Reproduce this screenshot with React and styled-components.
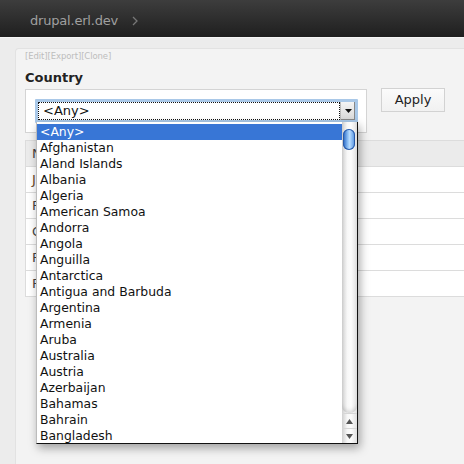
import React from "react";
import styled, { createGlobalStyle } from "styled-components";

const Global = createGlobalStyle`
  html, body { margin: 0; padding: 0; }
  body {
    width: 464px; height: 464px; overflow: hidden;
    background: #ececec;
    font-family: "DejaVu Sans", "Liberation Sans", sans-serif;
  }
`;

const Page = styled.div`
  position: relative;
  width: 464px;
  height: 464px;
  display: flex;
  flex-direction: column;
`;

const TopBar = styled.div`
  height: 38px;
  flex: none;
  background: linear-gradient(#3d3d3d, #1f1f1f);
  border-bottom: 1px solid #f6f6f6;
  display: flex;
  align-items: center;
  padding: 4px 0 0 30px;
  box-sizing: border-box;
  gap: 14px;
`;

const Crumb = styled.span`
  color: #a0a0a0;
  font-size: 13px;
  font-family: "DejaVu Sans", sans-serif;
  letter-spacing: -0.2px;
`;

const Chevron = styled.svg`
  width: 6px;
  height: 10px;
`;

const Body = styled.div`
  flex: 1;
  padding: 10px 0 0 15px;
  display: flex;
`;

const Panel = styled.div`
  flex: 1;
  background: #f3f3f3;
  border-top: 1px solid #e2e2e2;
  border-left: 1px solid #e2e2e2;
  border-top-left-radius: 4px;
  padding: 2px 0 0 9px;
  display: flex;
  flex-direction: column;
`;

const Links = styled.div`
  font-size: 8.5px;
  color: #bdbdbd;
  height: 11px;
  line-height: 11px;
  font-family: "DejaVu Sans", sans-serif;
  letter-spacing: -0.1px;
`;

const Label = styled.div`
  font-weight: bold;
  font-size: 13px;
  color: #222;
  margin-top: 8px;
  height: 16px;
  line-height: 16px;
`;

const FormRow = styled.div`
  display: flex;
  align-items: flex-start;
  margin-top: 3px;
  gap: 13px;
`;

const FormBox = styled.div`
  width: 342px;
  height: 44px;
  background: #fff;
  border: 1px solid #d4d4d4;
  padding: 9px 0 0 9px;
  box-sizing: border-box;
`;

const SelectRing = styled.div`
  width: 323px;
  height: 24px;
  box-sizing: border-box;
  border: 3px solid #a9c8e8;
  border-radius: 1px;
  display: flex;
  background: #fff;
`;

const SelectValue = styled.div`
  flex: 1;
  border: 1px dotted #111;
  font-size: 13px;
  line-height: 16px;
  padding-left: 4px;
  color: #111;
`;

const SelectButton = styled.div`
  width: 14px;
  background: linear-gradient(#f4f4f4, #d8d8d8);
  border-left: 1px solid #bbb;
  display: flex;
  align-items: center;
  justify-content: center;
  box-shadow: inset -1px -1px 0 #888;
`;

const ApplyButton = styled.button`
  width: 64px;
  height: 24px;
  margin-left: 1px;
  margin-top: -1px;
  border: 1px solid #d2d2d2;
  background: linear-gradient(#fbfbfb, #f1f1f1);
  font-family: "DejaVu Sans", sans-serif;
  font-size: 13px;
  color: #222;
  padding: 0;
  line-height: 20px;
`;

const Table = styled.div`
  margin-top: 7px;
  border: 1px solid #dcdcdc;
  border-right: none;
  display: flex;
  flex-direction: column;
`;

const Row = styled.div`
  height: 25px;
  border-top: ${(p) => (p.$first ? "none" : "1px solid #dcdcdc")};
  background: ${(p) => (p.$head ? "#ebebeb" : "#fff")};
  font-size: 13px;
  line-height: 25px;
  padding-left: 6px;
  color: ${(p) => p.$color || "#444"};
`;

const Dropdown = styled.div`
  position: absolute;
  left: 36px;
  top: 122px;
  width: 322px;
  height: 322px;
  box-sizing: border-box;
  background: #fff;
  border-right: 1px solid #111;
  border-bottom: 1px solid #111;
  border-left: 1px solid #bcbcbc;
  box-shadow: 2px 4px 9px rgba(0, 0, 0, 0.35);
  display: flex;
`;

const List = styled.div`
  flex: 1;
  padding-top: 2px;
  display: flex;
  flex-direction: column;
`;

const Item = styled.div`
  height: 16px;
  line-height: 16px;
  font-size: 12.4px;
  padding-left: 3px;
  color: ${(p) => (p.$selected ? "#fff" : "#111")};
  background: ${(p) => (p.$selected ? "#3876d6" : "transparent")};
  white-space: nowrap;
`;

const Scrollbar = styled.div`
  width: 15px;
  display: flex;
  flex-direction: column;
  background: linear-gradient(to right, #cfcfcf, #f7f7f7 35%, #fcfcfc 60%, #e0e0e0);
`;

const Track = styled.div`
  flex: 1;
  padding: 7px 0 0 1px;
  border-bottom-left-radius: 7px;
  border-bottom-right-radius: 7px;
  box-shadow: inset 0 -4px 4px -2px rgba(0,0,0,0.15);
`;

const Thumb = styled.div`
  width: 12px;
  height: 21px;
  border-radius: 6px;
  background: linear-gradient(to right, #1f5fbf, #8ec0f4 40%, #b8dcff 55%, #4f8fe0);
  box-shadow: inset 0 0 0 1px #2a5aa8;
`;

const Arrow = styled.div`
  height: 15px;
  display: flex;
  align-items: center;
  justify-content: center;
  border-top: 1px solid #d6d6d6;
  box-sizing: border-box;
`;

const countries = [
  "Afghanistan", "Aland Islands", "Albania", "Algeria", "American Samoa",
  "Andorra", "Angola", "Anguilla", "Antarctica", "Antigua and Barbuda",
  "Argentina", "Armenia", "Aruba", "Australia", "Austria", "Azerbaijan",
  "Bahamas", "Bahrain", "Bangladesh",
];

export default function App() {
  return (
    <Page>
      <Global />
      <TopBar>
        <Crumb>drupal.erl.dev</Crumb>
        <Chevron viewBox="0 0 6 10">
          <path d="M1 1 L5 5 L1 9" fill="none" stroke="#777" strokeWidth="1.3" />
        </Chevron>
      </TopBar>
      <Body>
        <Panel>
          <Links>[Edit][Export][Clone]</Links>
          <Label>Country</Label>
          <FormRow>
            <FormBox>
              <SelectRing>
                <SelectValue>&lt;Any&gt;</SelectValue>
                <SelectButton>
                  <svg width="7" height="4" viewBox="0 0 7 4">
                    <path d="M0 0 L7 0 L3.5 4 Z" fill="#111" />
                  </svg>
                </SelectButton>
              </SelectRing>
            </FormBox>
            <ApplyButton>Apply</ApplyButton>
          </FormRow>
          <Table>
            <Row $head $first>N</Row>
            <Row $color="#6b4a2a">J</Row>
            <Row>F</Row>
            <Row>C</Row>
            <Row>F</Row>
            <Row>F</Row>
          </Table>
        </Panel>
      </Body>
      <Dropdown>
        <List>
          <Item $selected>&lt;Any&gt;</Item>
          {countries.map((c) => (
            <Item key={c}>{c}</Item>
          ))}
        </List>
        <Scrollbar>
          <Track>
            <Thumb />
          </Track>
          <Arrow>
            <svg width="7" height="5" viewBox="0 0 7 5">
              <path d="M0 5 L7 5 L3.5 0 Z" fill="#555" />
            </svg>
          </Arrow>
          <Arrow>
            <svg width="7" height="5" viewBox="0 0 7 5">
              <path d="M0 0 L7 0 L3.5 5 Z" fill="#555" />
            </svg>
          </Arrow>
        </Scrollbar>
      </Dropdown>
    </Page>
  );
}
